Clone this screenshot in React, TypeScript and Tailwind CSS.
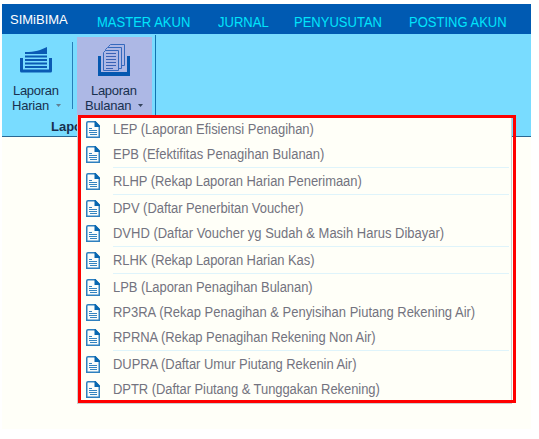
import React from 'react';

type Entry = { label: string; tracking: string; divider?: boolean };

const entries: Entry[] = [
  { label: 'LEP (Laporan Efisiensi Penagihan)', tracking: 'tracking-[-0.03px]' },
  { label: 'EPB (Efektifitas Penagihan Bulanan)', tracking: 'tracking-normal', divider: true },
  { label: 'RLHP (Rekap Laporan Harian Penerimaan)', tracking: 'tracking-[-0.06px]', divider: true },
  { label: 'DPV (Daftar Penerbitan Voucher)', tracking: 'tracking-[-0.05px]' },
  { label: 'DVHD (Daftar Voucher yg Sudah & Masih Harus Dibayar)', tracking: 'tracking-normal', divider: true },
  { label: 'RLHK (Rekap Laporan Harian Kas)', tracking: 'tracking-[-0.07px]', divider: true },
  { label: 'LPB (Laporan Penagihan Bulanan)', tracking: 'tracking-[-0.06px]' },
  { label: 'RP3RA (Rekap Penagihan & Penyisihan Piutang Rekening Air)', tracking: 'tracking-normal' },
  { label: 'RPRNA (Rekap Penagihan Rekening Non Air)', tracking: 'tracking-[-0.06px]', divider: true },
  { label: 'DUPRA (Daftar Umur Piutang Rekenin Air)', tracking: 'tracking-[-0.05px]' },
  { label: 'DPTR (Daftar Piutang & Tunggakan Rekening)', tracking: 'tracking-[-0.06px]' },
];

function DocIcon() {
  return (
    <svg className="block h-[17px] w-[14px] shrink-0" viewBox="0 0 14 17">
      <path d="M2 .75H9L13.25 5V16.25H.75V2Q.75.75 2 .75Z" fill="#fafdfb" stroke="#2f80bf" strokeWidth="1.5" />
      <path d="M8.5 0H9.5L14 4.8V6H8.5Z" fill="#0867b0" />
      <path d="M3 7.5H6M3 9.5H11M3 11.5H11M4 13.5H11" stroke="#3484c0" strokeWidth="1" />
    </svg>
  );
}

function DailyIcon() {
  return (
    <svg className="block h-[26px] w-8" viewBox="0 0 32 26">
      <path d="M5 5C15 5 21 3 27 0V7H5Z" fill="#0a5ab4" />
      <path d="M5 9.5H27M5 13H27M5 16.5H27M5 20H27" stroke="#0a5ab4" strokeWidth="2" />
      <path d="M1.5 11V24H30.5V11" fill="none" stroke="#0a5ab4" strokeWidth="3" strokeLinejoin="round" />
    </svg>
  );
}

function MonthlyIcon() {
  return (
    <svg className="block h-8 w-8" viewBox="0 0 32 32">
      <path d="M0 12H3V28H29V12H32V32H0Z" fill="#0558b0" />
      <g fill="#adb8e5" stroke="#3569bd" strokeWidth="1">
        <path d="M12.5.5H26.5V21.5H10.5V2.5Z" />
        <path d="M9.5 3.5H23.5V24.5H7.5V5.5Z" />
        <path d="M7.5 6.5H20.5V26.5H5.5V8.5Z" />
      </g>
      <path d="M8 9.5H18M8 12.5H18M8 15.5H18M8 18.5H18M8 21.5H18M8 24.5H15" stroke="#3a62b5" />
    </svg>
  );
}

function Arrow({ tone }: { tone: string }) {
  return (
    <svg className={`h-[3px] w-[5px] ${tone}`} viewBox="0 0 5 3">
      <path d="M0 0H5L2.5 3Z" fill="currentColor" />
    </svg>
  );
}

export default function App() {
  return (
    <div className="h-[439px] w-[539px] overflow-hidden bg-white pt-1 pl-0.5 font-['Liberation_Sans',Arial,sans-serif]">
      <div className="relative h-[425px] w-[529px] bg-[#fffff8]">
        <nav className="flex h-[30px] bg-[#005ab2] text-[14px] leading-4 whitespace-nowrap text-[#00e5fb]">
          <span className="w-[95px] pt-2 pl-2 text-[13px] text-white">SIMiBIMA</span>
          <span className="w-[121px] origin-left scale-x-[0.93] pt-2.5">MASTER AKUN</span>
          <span className="w-[76px] origin-left scale-x-[0.93] pt-2.5">JURNAL</span>
          <span className="w-[115px] origin-left scale-x-[0.93] pt-2.5">PENYUSUTAN</span>
          <span className="origin-left scale-x-[0.93] pt-2.5">POSTING AKUN</span>
        </nav>

        <div className="flex h-[103px] border-b border-[#2a6793] bg-[#79dcff] text-[13px] text-[#18304f]">
          <div className="flex h-full w-[153px] flex-col">
            <div className="flex h-[81px]">
              <button className="flex w-[70px] flex-col pt-[13px] text-left leading-[15px]">
                <span className="pl-[18px]"><DailyIcon /></span>
                <span className="mt-2.5 pl-[11px] tracking-[-0.3px]">Laporan</span>
                <span className="flex items-center gap-[7px] pl-2.5 tracking-[-0.2px]">Harian <Arrow tone="text-[#617f91]" /></span>
              </button>
              <div className="mt-2 h-[67px] w-px bg-[#267fb8]" />
              <button className="mt-[3px] ml-1 flex w-[75px] flex-col bg-[#adb8e5] pt-[7px] text-left leading-[15px]">
                <span className="pl-[21px]"><MonthlyIcon /></span>
                <span className="mt-[7px] pl-3.5 tracking-[-0.3px]">Laporan</span>
                <span className="flex items-center gap-[7px] pl-2 tracking-[-0.2px]">Bulanan <Arrow tone="text-[#34435c]" /></span>
              </button>
            </div>
            <div className="pt-[4px] pl-[49px] leading-[15px] font-bold">Laporan</div>
          </div>
          <div className="mt-px h-[81px] w-px bg-[#1173b0]" />
        </div>

        {/* Open dropdown of the monthly report button */}
        <div className="absolute top-[111px] left-[75px] h-[289px] w-[435px] border border-[#cdced0] bg-[#fffff8] pt-px">
          {entries.map((entry) => (
            <React.Fragment key={entry.label}>
              <div className="flex h-[25px] items-center pl-2 text-[14px] leading-4 whitespace-nowrap text-[#73737f]">
                <DocIcon />
                <span className={`mb-0.5 ml-[13px] origin-left scale-x-[0.927] ${entry.tracking}`}>{entry.label}</span>
              </div>
              {entry.divider && <div className="mr-0.5 ml-[35px] h-0.5 border-t border-[#dff4fb]" />}
            </React.Fragment>
          ))}
        </div>
        <div className="absolute top-[111px] left-[76px] h-[288px] w-[438px] border-3 border-[#ff0000]" />
      </div>
    </div>
  );
}
